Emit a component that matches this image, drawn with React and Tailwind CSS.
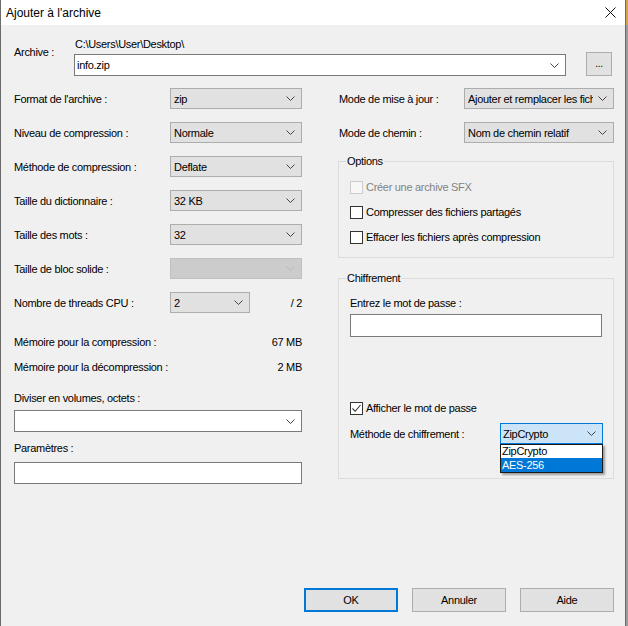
import React from 'react';

const font = { fontFamily: '"Liberation Sans", Arial, sans-serif' };

const Chevron = ({ disabled }) => (
  <svg width="9" height="5" viewBox="0 0 9 5" className="shrink-0">
    <path d="M0.5 0.5 L4.5 4.5 L8.5 0.5" fill="none" stroke={disabled ? '#b8b8b8' : '#444444'} strokeWidth="1" />
  </svg>
);

const Select = ({ value, className = '', disabled }) => (
  <div
    className={
      'flex items-center justify-between h-[21px] pl-[3px] pr-[6px] border ' +
      (disabled ? 'bg-[#cccccc] border-[#bfbfbf] ' : 'bg-[#e1e1e1] border-[#adadad] ') +
      className
    }
  >
    <span className="flex-1 min-w-0 mr-[5px] whitespace-nowrap overflow-hidden">{value}</span>
    <Chevron disabled={disabled} />
  </div>
);

const Row = ({ label, children }) => (
  <div className="flex items-center justify-between h-[21px]">
    <span>{label}</span>
    {children}
  </div>
);

const Checkbox = ({ label, checked, disabled }) => (
  <div className="flex items-center h-[14px]">
    <div
      className={
        'w-[13px] h-[13px] border flex items-center justify-center ' +
        (disabled ? 'border-[#cccccc] bg-[#f7f7f7]' : 'border-[#333333] bg-white')
      }
    >
      {checked && (
        <svg width="11" height="11" viewBox="0 0 11 11">
          <path d="M1.5 5.5 L4.2 8.3 L9.5 2" fill="none" stroke="#333333" strokeWidth="1.1" />
        </svg>
      )}
    </div>
    <span className={'ml-[3px] ' + (disabled ? 'text-[#838383]' : '')}>{label}</span>
  </div>
);

const Group = ({ title, className = '', children }) => (
  <div className={'relative border border-[#dcdcdc] ' + className}>
    <span className="absolute -top-[8px] left-[7px] px-[1px] bg-[#f0f0f0] leading-[14px]">{title}</span>
    {children}
  </div>
);

export default function App() {
  return (
    <div className="w-[628px] h-[626px] flex overflow-hidden text-[11px] leading-[14px] tracking-[-0.3px] text-black" style={font}>
      <div className="w-[626px] h-full border-l border-r border-[#6b6b6b] bg-[#f0f0f0] flex flex-col">
        {/* title bar */}
        <div className="h-[25px] bg-white flex items-center justify-between pl-[5px] pr-[9px]">
          <span className="text-[12px] tracking-normal">Ajouter à l'archive</span>
          <svg width="11" height="11" viewBox="0 0 11 11">
            <path d="M0.5 0.5 L10.5 10.5 M10.5 0.5 L0.5 10.5" stroke="#111111" strokeWidth="1" />
          </svg>
        </div>

        <div className="flex-1 flex flex-col pl-[13px] pr-[11px]">
          {/* archive */}
          <div className="flex mt-[12px]">
            <span className="w-[60px] pt-[8px]">Archive :</span>
            <div className="w-[492px] flex flex-col">
              <span className="pl-[1px]">C:\Users\User\Desktop\</span>
              <div className="mt-[3px] h-[22px] bg-white border border-[#7a7a7a] flex items-center justify-between pl-[2px] pr-[6px]">
                <span>info.zip</span>
                <Chevron />
              </div>
            </div>
            <div className="ml-[20px] mt-[15px] w-[26px] h-[24px] bg-[#e1e1e1] border border-[#adadad] flex items-center justify-center text-[10px]">
              ...
            </div>
          </div>

          <div className="flex mt-[12px] gap-[36px]">
            {/* left column */}
            <div className="w-[288px] flex flex-col">
              <div className="flex flex-col gap-[13px]">
                <Row label="Format de l'archive :"><Select value="zip" className="w-[132px]" /></Row>
                <Row label="Niveau de compression :"><Select value="Normale" className="w-[132px]" /></Row>
                <Row label="Méthode de compression :"><Select value="Deflate" className="w-[132px]" /></Row>
                <Row label="Taille du dictionnaire :"><Select value="32 KB" className="w-[132px]" /></Row>
                <Row label="Taille des mots :"><Select value="32" className="w-[132px]" /></Row>
                <Row label="Taille de bloc solide :"><Select value="" disabled className="w-[132px]" /></Row>
                <div className="flex items-center h-[21px]">
                  <span className="w-[156px]">Nombre de threads CPU :</span>
                  <Select value="2" className="w-[80px]" />
                  <span className="flex-1 text-right">/ 2</span>
                </div>
              </div>
              <div className="flex justify-between mt-[22px]">
                <span>Mémoire pour la compression :</span>
                <span>67 MB</span>
              </div>
              <div className="flex justify-between mt-[11px]">
                <span>Mémoire pour la décompression :</span>
                <span>2 MB</span>
              </div>
              <span className="mt-[17px]">Diviser en volumes, octets :</span>
              <div className="mt-[5px] h-[22px] bg-white border border-[#7a7a7a] flex items-center justify-end pr-[6px]">
                <Chevron />
              </div>
              <span className="mt-[9px]">Paramètres :</span>
              <div className="mt-[7px] h-[22px] bg-white border border-[#7a7a7a]" />
            </div>

            {/* right column */}
            <div className="w-[276px] flex flex-col">
              <div className="pl-[1px]">
                <Row label="Mode de mise à jour :"><Select value="Ajouter et remplacer les fichiers" className="w-[150px]" /></Row>
              </div>
              <div className="pl-[1px] mt-[13px]">
                <Row label="Mode de chemin :"><Select value="Nom de chemin relatif" className="w-[150px]" /></Row>
              </div>

              <Group title="Options" className="mt-[18px] h-[97px] pt-[18px] pl-[11px] flex flex-col gap-[11px]">
                <Checkbox label="Créer une archive SFX" disabled />
                <Checkbox label="Compresser des fichiers partagés" />
                <Checkbox label="Effacer les fichiers après compression" />
              </Group>

              <Group title="Chiffrement" className="mt-[20px] h-[201px] pt-[17px] pl-[11px] flex flex-col">
                <span>Entrez le mot de passe :</span>
                <div className="mt-[4px] w-[252px] h-[23px] bg-white border border-[#7a7a7a]" />
                <div className="mt-[64px]">
                  <Checkbox label="Afficher le mot de passe" checked />
                </div>
                <div className="mt-[8px] flex items-center h-[21px]">
                  <span className="w-[150px]">Méthode de chiffrement :</span>
                  <div className="relative w-[103px]">
                    <div className="h-[21px] bg-[#cce4f7] border border-[#0078d7] flex items-center justify-between pl-[2px] pr-[6px]">
                      <span>ZipCrypto</span>
                      <Chevron />
                    </div>
                    <div className="absolute top-full left-0 w-[103px] border border-[#1a1a1a] bg-white shadow-[2px_2px_2px_rgba(0,0,0,0.35)] flex flex-col">
                      <span className="h-[13px] leading-[13px] pl-[1px]">ZipCrypto</span>
                      <span className="h-[14px] leading-[14px] pl-[1px] bg-[#0078d7] text-white">AES-256</span>
                    </div>
                  </div>
                </div>
              </Group>
            </div>
          </div>

          {/* buttons */}
          <div className="mt-auto mb-[14px] flex justify-end gap-[14px]">
            <div className="w-[94px] h-[24px] bg-[#e1e1e1] border-2 border-[#0078d7] flex items-center justify-center">OK</div>
            <div className="w-[94px] h-[24px] bg-[#e1e1e1] border border-[#adadad] flex items-center justify-center">Annuler</div>
            <div className="w-[94px] h-[24px] bg-[#e1e1e1] border border-[#adadad] flex items-center justify-center">Aide</div>
          </div>
        </div>
      </div>
      <div className="w-[2px] flex flex-col">
        <div className="h-[25px] bg-[#d2a24f]" />
        <div className="flex-1 bg-[#9a9a9a]" />
      </div>
    </div>
  );
}
